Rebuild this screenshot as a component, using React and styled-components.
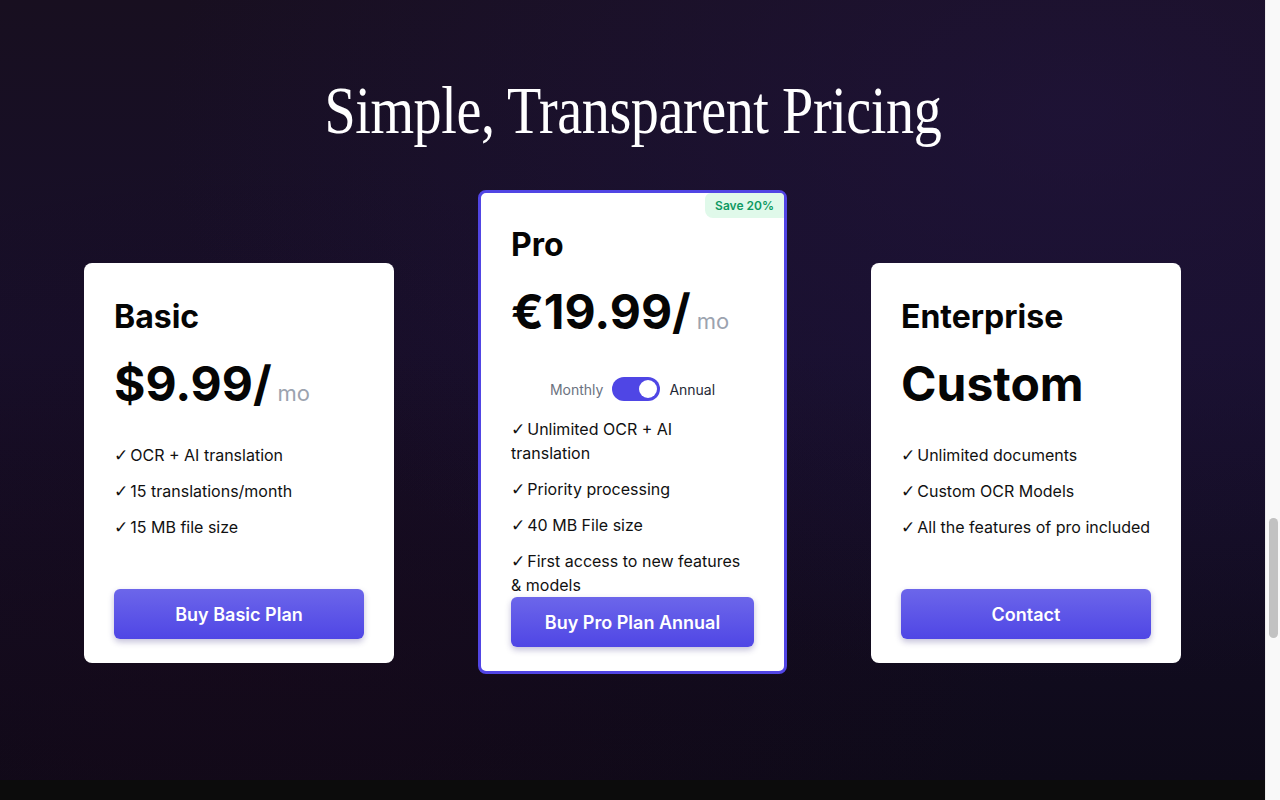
import { useState } from "react";
import styled, { createGlobalStyle } from "styled-components";

const GlobalStyle = createGlobalStyle`
  html, body {
    margin: 0;
    padding: 0;
    background: #0c0c0c;
    overflow: hidden;
  }
  body {
    font-family: Inter, "Noto Sans", sans-serif;
    -webkit-font-smoothing: antialiased;
  }
`;

const Page = styled.main`
  margin-right: 15px;
`;

const Section = styled.section`
  height: 780px;
  box-sizing: border-box;
  padding-top: 76px;
  background:
    radial-gradient(ellipse at 85% 15%, rgba(36, 22, 70, 0.5), transparent 60%),
    radial-gradient(ellipse at 20% 85%, rgba(26, 8, 24, 0.45), transparent 55%),
    linear-gradient(180deg, #180f20 0%, #170f2b 45%, #0e0a19 100%);
`;

const Heading = styled.h2`
  margin: 0 0 46px;
  text-align: center;
  color: #fff;
  font-family: "Liberation Serif", "Times New Roman", serif;
  font-weight: 400;
  font-size: 68px;
  line-height: 68px;
  letter-spacing: -0.5px;

  span {
    display: inline-block;
    transform: scaleX(0.825);
  }
`;

const Plans = styled.div`
  display: flex;
  justify-content: center;
  align-items: flex-start;
  gap: 84px;
`;

const Card = styled.div`
  position: relative;
  box-sizing: border-box;
  width: ${(p) => (p.$featured ? "309px" : "310px")};
  min-height: ${(p) => (p.$featured ? "auto" : "400px")};
  margin-top: ${(p) => (p.$featured ? "0" : "73px")};
  padding: ${(p) => (p.$featured ? "34px 30px 24px" : "36px 30px 24px")};
  display: flex;
  flex-direction: column;
  background: #fff;
  border-radius: 8px;
  border: ${(p) => (p.$featured ? "3px solid #5145e4" : "none")};
`;

const Badge = styled.div`
  position: absolute;
  top: 0;
  right: 0;
  padding: 6px 10px 5px;
  background: #e0f9ea;
  color: #0f9a62;
  font-size: 12px;
  font-weight: 600;
  line-height: 14px;
  border-radius: 6px 4px 0 8px;
`;

const PlanName = styled.h3`
  margin: 0 0 20px;
  font-size: 32px;
  line-height: 36px;
  font-weight: 700;
  color: #050505;
`;

const PriceRow = styled.div`
  display: flex;
  align-items: baseline;
  gap: 6px;
  margin-bottom: 30px;
  height: 58px;
  line-height: 58px;
`;

const Price = styled.span`
  font-size: 48px;
  font-weight: 700;
  color: #050505;
`;

const Period = styled.span`
  font-size: 22px;
  font-weight: 400;
  color: #9ca3af;
`;

const BillingToggle = styled.div`
  display: flex;
  justify-content: center;
  align-items: center;
  gap: 9px;
  margin: 6px 0 16px;
  font-size: 14px;
`;

const ToggleLabel = styled.span`
  color: ${(p) => (p.$active ? "#1f2937" : "#6b7280")};
`;

const Switch = styled.button`
  width: 48px;
  height: 24px;
  padding: 3px;
  border: none;
  border-radius: 12px;
  background: #4f46e5;
  display: flex;
  justify-content: ${(p) => (p.$on ? "flex-end" : "flex-start")};
  cursor: pointer;

  &::after {
    content: "";
    width: 18px;
    height: 18px;
    border-radius: 50%;
    background: #fff;
  }
`;

const Features = styled.ul`
  list-style: none;
  margin: 0;
  padding: 0;
  display: flex;
  flex-direction: column;
  gap: 12px;
`;

const Feature = styled.li`
  font-size: 16px;
  line-height: 24px;
  color: #111;
`;

const Check = styled.span`
  font-family: "DejaVu Sans", sans-serif;
  font-size: 17px;
  line-height: 1;
  margin-right: 2px;
`;

const BuyButton = styled.button`
  margin-top: auto;
  height: 50px;
  width: 100%;
  border: none;
  border-radius: 6px;
  background: linear-gradient(180deg, #6c66ea 0%, #4f46e5 100%);
  box-shadow: 0 3px 6px rgba(40, 30, 120, 0.28);
  color: #fff;
  font-family: inherit;
  font-size: 18px;
  font-weight: 600;
  cursor: pointer;
`;

const Footer = styled.footer`
  height: 20px;
  background: #0c0c0c;
`;

const ScrollTrack = styled.div`
  position: fixed;
  top: 0;
  right: 0;
  bottom: 0;
  width: 15px;
  box-sizing: border-box;
  background: #f9f9f9;
  border-left: 1px solid #eeeeee;
`;

const ScrollThumb = styled.div`
  margin: 518px 0 0 3px;
  width: 9px;
  height: 120px;
  border-radius: 5px;
  background: #c2c2c2;
`;

const plans = [
  {
    name: "Basic",
    price: "$9.99/",
    features: ["OCR + AI translation", "15 translations/month", "15 MB file size"],
    cta: "Buy Basic Plan",
  },
  {
    name: "Pro",
    price: "€19.99/",
    featured: true,
    features: [
      "Unlimited OCR + AI translation",
      "Priority processing",
      "40 MB File size",
      "First access to new features & models",
    ],
    cta: "Buy Pro Plan Annual",
  },
  {
    name: "Enterprise",
    custom: "Custom",
    features: ["Unlimited documents", "Custom OCR Models", "All the features of pro included"],
    cta: "Contact",
  },
];

export default function App() {
  const [annual, setAnnual] = useState(true);

  return (
    <>
      <GlobalStyle />
      <Page>
        <Section>
          <Heading>
            <span>Simple, Transparent Pricing</span>
          </Heading>
          <Plans>
            {plans.map((plan) => (
              <Card key={plan.name} $featured={plan.featured}>
                {plan.featured && <Badge>Save 20%</Badge>}
                <PlanName>{plan.name}</PlanName>
                <PriceRow>
                  {plan.custom ? (
                    <Price>{plan.custom}</Price>
                  ) : (
                    <>
                      <Price>{plan.price}</Price>
                      <Period>mo</Period>
                    </>
                  )}
                </PriceRow>
                {plan.featured && (
                  <BillingToggle>
                    <ToggleLabel $active={!annual}>Monthly</ToggleLabel>
                    <Switch $on={annual} onClick={() => setAnnual(!annual)} />
                    <ToggleLabel $active={annual}>Annual</ToggleLabel>
                  </BillingToggle>
                )}
                <Features>
                  {plan.features.map((f) => (
                    <Feature key={f}>
                      <Check>✓</Check>
                      {f}
                    </Feature>
                  ))}
                </Features>
                <BuyButton>{plan.cta}</BuyButton>
              </Card>
            ))}
          </Plans>
        </Section>
        <Footer />
      </Page>
      <ScrollTrack>
        <ScrollThumb />
      </ScrollTrack>
    </>
  );
}
